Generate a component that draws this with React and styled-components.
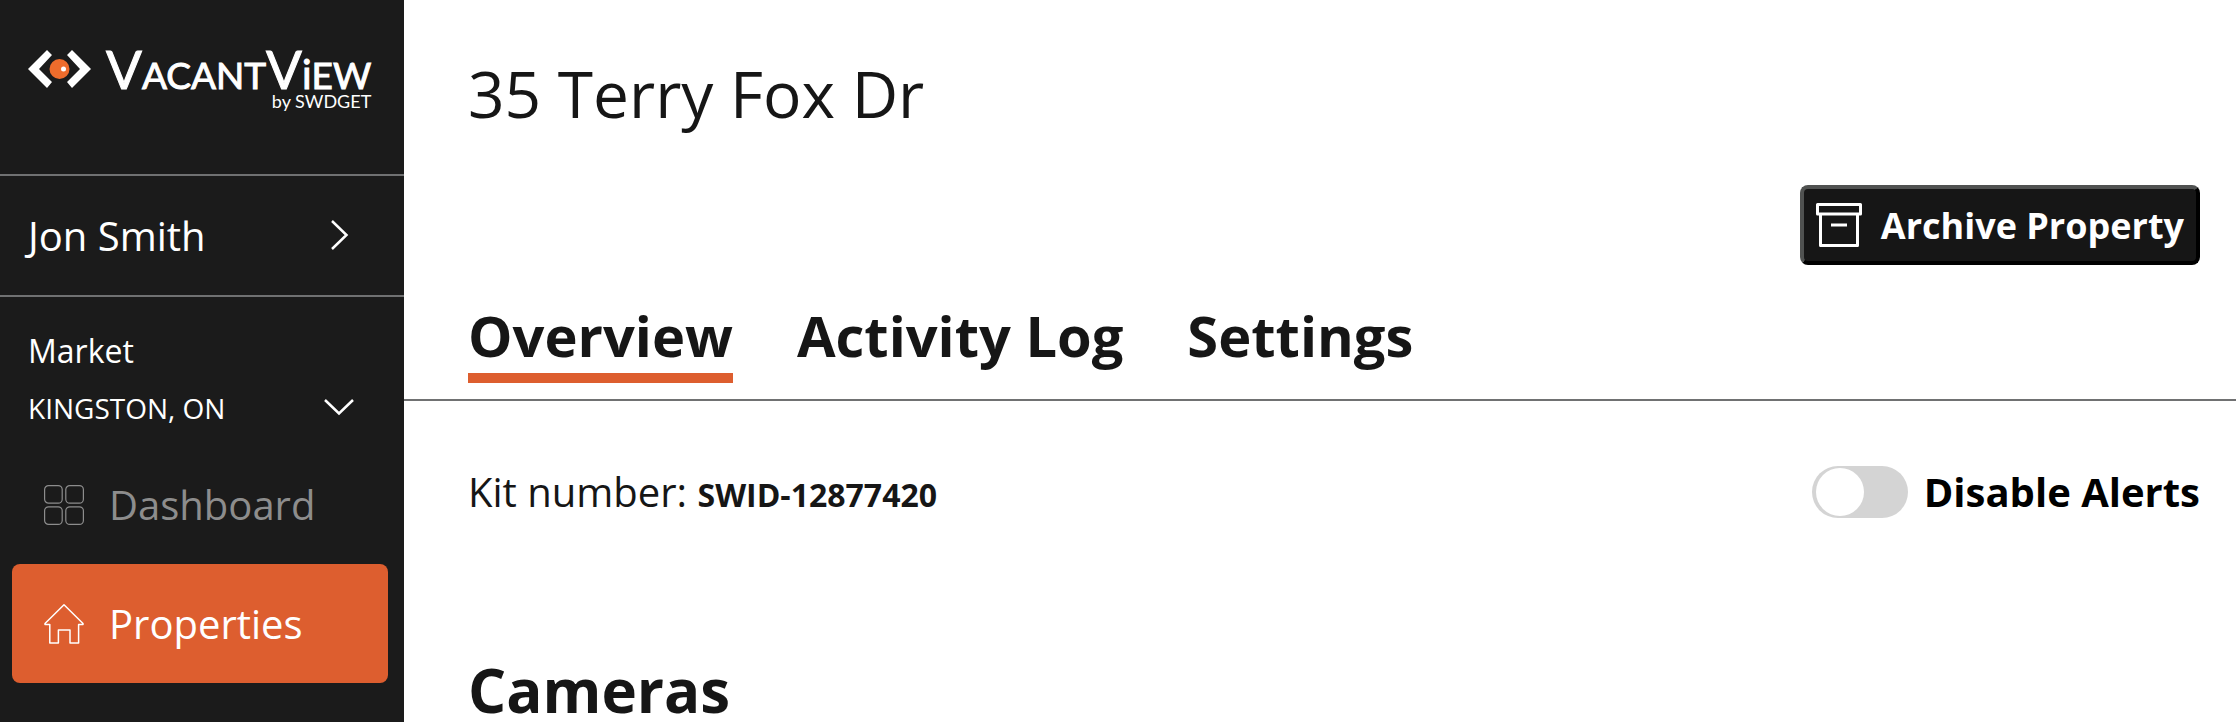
import React, { useState } from 'react'
import styled, { createGlobalStyle } from 'styled-components'


const tabs = ['Overview', 'Activity Log', 'Settings']

function App() {

    const [activeTab, setActiveTab] = useState('Overview')
    const [market, setMarket] = useState('KINGSTON, ON')
    const [alertsOff, setAlertsOff] = useState(false)

    return (
        <Page>
            <GlobalStyle />
            <Sidebar>
                <Brand href="#">
                    <BrandMark />
                    <Wordmark>
                        <BrandName>VacantV<i>i</i>ew</BrandName>
                        <BrandOwner>by <b>SWDGET</b></BrandOwner>
                    </Wordmark>
                </Brand>
                <UserButton type="button">
                    Jon Smith
                    <ChevronRight />
                </UserButton>
                <Market>
                    <MarketLabel htmlFor="market">Market</MarketLabel>
                    <MarketPicker>
                        <select id="market" value={market} onChange={(e) => setMarket(e.target.value)}>
                            <option>KINGSTON, ON</option>
                        </select>
                        <ChevronDown />
                    </MarketPicker>
                </Market>
                <Nav>
                    <NavLink href="#">
                        <DashboardIcon />
                        Dashboard
                    </NavLink>
                    <NavLink href="#" $active>
                        <HomeIcon />
                        Properties
                    </NavLink>
                </Nav>
            </Sidebar>
            <Main>
                <Header>
                    <Title>35 Terry Fox Dr</Title>
                    <ArchiveButton type="button">
                        <ArchiveIcon />
                        Archive Property
                    </ArchiveButton>
                </Header>
                <Tabs>
                    {tabs.map((tab) => (
                        <Tab
                            key={tab}
                            type="button"
                            $active={tab === activeTab}
                            onClick={() => setActiveTab(tab)}
                        >
                            {tab}
                        </Tab>
                    ))}
                </Tabs>
                <KitRow>
                    <p>Kit number: <KitId>SWID-12877420</KitId></p>
                    <AlertsLabel>
                        <Toggle
                            type="checkbox"
                            role="switch"
                            checked={alertsOff}
                            onChange={(e) => setAlertsOff(e.target.checked)}
                        />
                        Disable Alerts
                    </AlertsLabel>
                </KitRow>
                <SectionTitle>Cameras</SectionTitle>
            </Main>
        </Page>
    )
}

export default App


function BrandMark() {
    return (
        <svg width="64" height="40" viewBox="0 0 64 40" aria-hidden="true">
            <path d="M19 1 L24 6 L11 20 L24 33 L19 39 L0 20 Z" fill="#fff" />
            <path d="M44 1 L39 6 L52 20 L39 33 L44 39 L63 20 Z" fill="#fff" />
            <circle cx="31.5" cy="20" r="10" fill="#ee6c2c" />
            <circle cx="35.5" cy="20" r="2.5" fill="#fff" />
        </svg>
    )
}

function ChevronRight() {
    return (
        <svg width="30" height="32" viewBox="0 0 30 32" fill="none" stroke="#fff" strokeWidth="2.5" aria-hidden="true">
            <path d="M8 1 L22.5 15 L8 29" />
        </svg>
    )
}

function ChevronDown() {
    return (
        <svg width="30" height="20" viewBox="0 0 30 20" fill="none" stroke="#fff" strokeWidth="2.5" aria-hidden="true">
            <path d="M1 2 L15 15.5 L29 2" />
        </svg>
    )
}

function DashboardIcon() {
    return (
        <svg width="40" height="40" viewBox="0 0 40 40" fill="none" stroke="currentColor" strokeWidth="1.2" aria-hidden="true">
            <rect x="0.6" y="0.6" width="17.6" height="17.6" rx="4" />
            <rect x="21.8" y="0.6" width="17.6" height="17.6" rx="4" />
            <rect x="0.6" y="21.8" width="17.6" height="17.6" rx="4" />
            <rect x="21.8" y="21.8" width="17.6" height="17.6" rx="4" />
        </svg>
    )
}

function HomeIcon() {
    return (
        <svg width="40" height="40" viewBox="0 0 40 40" fill="none" stroke="currentColor" strokeWidth="1.5" strokeLinejoin="round" aria-hidden="true">
            <path d="M20 0.8 L39 19.5 V20.6 H34.6 V39 H26 V26 H14.4 V39 H5.8 V20.6 H1 V19.5 Z" />
        </svg>
    )
}

function ArchiveIcon() {
    return (
        <svg width="46" height="44" viewBox="0 0 46 44" fill="none" stroke="currentColor" strokeWidth="3" strokeLinejoin="round" aria-hidden="true">
            <rect x="1.5" y="1.5" width="43" height="9.5" />
            <path d="M4.5 11 V42.5 H41.5 V11" />
            <path d="M15 22 H31" />
        </svg>
    )
}


const GlobalStyle = createGlobalStyle`
    * {
        box-sizing: border-box;
    }

    body, p, h1, h2 {
        margin: 0;
    }

    body, button, select {
        font-family: "Open Sans", "Noto Sans", sans-serif;
    }

    a {
        text-decoration: none;
    }

    button, select, input, label {
        cursor: pointer;
    }
`

const Page = styled.div`
    display: flex;
    height: 100vh;
    color: #161616;
    background: white;
    overflow: hidden;
`

const Sidebar = styled.aside`
    flex: none;
    width: 404px;
    color: white;
    background: #1b1b1b;
`

const Brand = styled.a`
    display: flex;
    align-items: flex-start;
    gap: 14px;
    height: 176px;
    padding: 49px 28px 0;
    color: white;
    border-bottom: 2px solid #707172;

    svg {
        flex: none;
    }
`

const Wordmark = styled.span`
    display: flex;
    flex-direction: column;
    align-items: flex-end;
    font-family: Lato, sans-serif;
`

const BrandName = styled.span`
    font-size: 53px;
    line-height: 40px;
    font-variant: small-caps;
    -webkit-text-stroke: 1px white;

    i {
        font-size: 40px;
        line-height: 20px;
        font-style: normal;
        font-variant: normal;
    }
`

const BrandOwner = styled.span`
    font-size: 18px;
    line-height: 24px;

    b {
        font-weight: 400;
    }
`

const UserButton = styled.button`
    display: flex;
    align-items: center;
    justify-content: space-between;
    width: 100%;
    height: 121px;
    padding: 0 50px 0 28px;
    font-size: 40px;
    color: white;
    background: none;
    border: none;
    border-bottom: 2px solid #707172;
`

const Market = styled.div`
    padding: 32px 50px 0 28px;
`

const MarketLabel = styled.label`
    display: block;
    font-size: 32px;
    line-height: 44px;
`

const MarketPicker = styled.div`
    display: flex;
    align-items: center;
    margin-top: 16px;

    select {
        flex: 1;
        height: 38px;
        padding: 0;
        font-size: 28px;
        color: white;
        background: none;
        border: none;
        appearance: none;
    }
`

const Nav = styled.nav`
    padding: 18px 16px 0 12px;
`

const NavLink = styled.a`
    display: flex;
    align-items: center;
    gap: 25px;
    height: 119px;
    padding: 0 32px;
    font-size: 40px;
    color: ${props => props.$active ? 'white' : '#8d8d8d'};
    background: ${props => props.$active ? '#dd5e2f' : 'none'};
    border-radius: 8px;
`

const Main = styled.main`
    flex: 1;
    min-width: 0;
`

const Header = styled.header`
    display: flex;
    flex-direction: column;
    padding: 50px 36px 0 64px;
`

const Title = styled.h1`
    font-size: 64px;
    line-height: 87px;
    font-weight: 400;
`

const ArchiveButton = styled.button`
    display: flex;
    align-items: center;
    align-self: flex-end;
    gap: 19px;
    height: 80px;
    margin-top: 48px;
    padding: 0 12px;
    font-size: 36px;
    font-weight: 700;
    color: white;
    background: #161616;
    border: 4px solid;
    border-color: #505251 #000 #000 #505251;
    border-radius: 8px;
`

const Tabs = styled.div`
    display: flex;
    gap: 64px;
    padding: 32px 36px 16px 64px;
    border-bottom: 2px solid #707172;
`

const Tab = styled.button`
    padding: 0;
    font-size: 56px;
    line-height: 76px;
    font-weight: 700;
    color: #161616;
    background: none;
    border: none;
    border-bottom: 10px solid ${props => props.$active ? '#dd5e2f' : 'transparent'};
`

const KitRow = styled.div`
    display: flex;
    align-items: center;
    justify-content: space-between;
    padding: 64px 36px 0 64px;
    font-size: 40px;
    line-height: 54px;
`

const KitId = styled.strong`
    font-size: 32px;
    line-height: 32px;
    font-weight: 700;
`

const AlertsLabel = styled.label`
    display: flex;
    align-items: center;
    gap: 16px;
    font-weight: 700;
    color: black;
`

const Toggle = styled.input`
    width: 96px;
    height: 52px;
    margin: 0;
    padding: 2px 4px;
    background: ${props => props.checked ? '#dd5e2f' : '#d4d4d4'};
    border-radius: 26px;
    appearance: none;

    &::before {
        content: '';
        display: block;
        width: 48px;
        height: 48px;
        margin-left: ${props => props.checked ? '40px' : '0'};
        background: white;
        border-radius: 50%;
    }
`

const SectionTitle = styled.h2`
    padding: 130px 36px 0 64px;
    font-size: 60px;
    line-height: 82px;
    font-weight: 700;
`
